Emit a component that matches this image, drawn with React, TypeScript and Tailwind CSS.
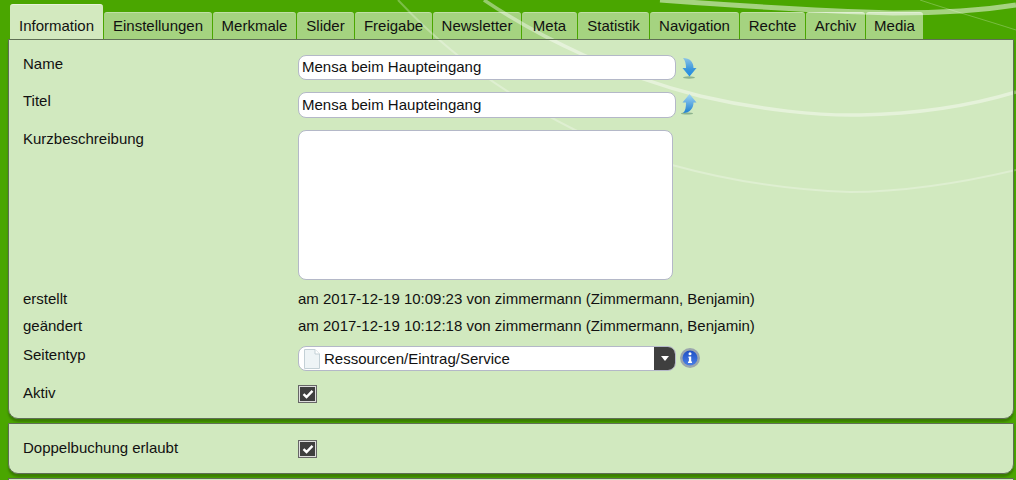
import React from 'react'

const tabs = [
  { label: 'Einstellungen', width: 'w-[108px]' },
  { label: 'Merkmale', width: 'w-[83px]' },
  { label: 'Slider', width: 'w-[57px]' },
  { label: 'Freigabe', width: 'w-[77px]' },
  { label: 'Newsletter', width: 'w-[88px]' },
  { label: 'Meta', width: 'w-[55px]' },
  { label: 'Statistik', width: 'w-[71px]' },
  { label: 'Navigation', width: 'w-[89px]' },
  { label: 'Rechte', width: 'w-[65px]' },
  { label: 'Archiv', width: 'w-[59px]' },
  { label: 'Media', width: 'w-[57px]' },
]

const Swoosh = () => (
  <svg className="absolute inset-0" width="1016" height="480" viewBox="0 0 1016 480" fill="none">
    <path d="M484 0C540 38 620 76 700 96C760 110 820 116 860 115C920 114 970 106 1016 92" stroke="#fff" strokeOpacity="0.42" strokeWidth="3.500" />
    <path d="M398 0C440 45 495 90 575 130C610 147 640 157 672 165C730 181 790 190 850 192C910 192 965 182 1016 170" stroke="#fff" strokeOpacity="0.28" strokeWidth="2" />
    <path d="M660 0C740 6 820 11 893 13C940 13 985 10 1016 5" stroke="#fff" strokeOpacity="0.5" strokeWidth="5" />
    <path d="M920 0C950 10 985 20 1016 30" stroke="#fff" strokeOpacity="0.25" strokeWidth="1" />
  </svg>
)

const ArrowDown = () => (
  <svg width="16" height="21" viewBox="0 0 16 21" className="ml-[5px] mt-[3px]">
    <defs>
      <linearGradient id="ad" x1="0" y1="0" x2="0" y2="1">
        <stop offset="0" stopColor="#8cc4e6" />
        <stop offset="0.6" stopColor="#3b97dc" />
        <stop offset="1" stopColor="#1d8ce6" />
      </linearGradient>
    </defs>
    <ellipse cx="8" cy="19.500" rx="6" ry="1.200" fill="#5f8f70" fillOpacity="0.6" />
    <path d="M2 0C9 0 12.500 4 12.500 10H15.500L8.500 18.500L1.500 10H5C5 6 4.500 3 2 0Z" fill="url(#ad)" />
  </svg>
)

const ArrowUp = () => (
  <svg width="16" height="21" viewBox="0 0 16 21" className="ml-[5px] mt-[2px]">
    <defs>
      <linearGradient id="au" x1="0" y1="0" x2="0" y2="1">
        <stop offset="0" stopColor="#a4d8f4" />
        <stop offset="1" stopColor="#1d7fd0" />
      </linearGradient>
    </defs>
    <ellipse cx="6" cy="19.500" rx="6" ry="1" fill="#5f8f70" fillOpacity="0.6" />
    <path d="M8.500 0L15.500 8.500H12.500C12.500 14 9 19 2 19C4.500 17 5 13 5 8.500H1.500L8.500 0Z" fill="url(#au)" />
  </svg>
)

const PageIcon = () => (
  <svg width="16" height="20" viewBox="0 0 16 20" className="shrink-0">
    <path d="M.5.500H11L15.500 5V19.500H.5Z" fill="#eef4f6" stroke="#c3d0d6" />
    <path d="M11 .5V5H15.500" fill="#fff" stroke="#c3d0d6" />
  </svg>
)

const InfoIcon = () => (
  <svg width="20" height="20" viewBox="0 0 20 20" className="ml-[4px] mt-[2px]">
    <defs>
      <linearGradient id="inf" x1="0" y1="0" x2="0" y2="1">
        <stop offset="0" stopColor="#1f4fc4" />
        <stop offset="1" stopColor="#4a7fe6" />
      </linearGradient>
    </defs>
    <circle cx="10" cy="10" r="10" fill="#9aa5ad" />
    <circle cx="10" cy="10" r="7.500" fill="url(#inf)" />
    <circle cx="10" cy="5.800" r="1.500" fill="#fff" />
    <path d="M8.500 8.500H11.200V13.500H12V15H8V13.500H8.900V10H8.500Z" fill="#fff" />
  </svg>
)

const Checkbox = () => (
  <div className="mt-px flex h-[18px] w-[19px] items-center justify-center border border-[#666] bg-[#ddd] p-px">
    <div className="flex h-full w-full items-center justify-center bg-[#3f3f3f]">
      <svg width="12" height="10" viewBox="0 0 12 10">
        <path d="M1.500 5.200L4.500 8L10.500 1.800" fill="none" stroke="#fff" strokeWidth="2.400" />
      </svg>
    </div>
  </div>
)

const Row: React.FC<{ label: string; className?: string; children: React.ReactNode }> = ({ label, className, children }) => (
  <div className={`flex ${className ?? ''}`}>
    <div className="w-[275px] shrink-0 text-[#111]">{label}</div>
    {children}
  </div>
)

const TextField = ({ value, tall }: { value: string; tall?: boolean }) => (
  <div
    className={`w-[378px] rounded-lg border border-[#b4b8c8] bg-white pl-[3px] text-[#111] ${tall ? 'h-[26px] leading-[24px]' : 'h-[25px] leading-[22px]'}`}
  >
    {value}
  </div>
)

export default function App() {
  return (
    <div className="relative h-[480px] w-[1016px] overflow-hidden bg-[#4aa600] font-['Liberation_Sans',Arial,sans-serif] text-[15px] leading-[17px]">
      <Swoosh />
      <div className="relative pl-[8px] pr-[2px]">
        <div className="flex h-[39px] items-end pl-[2px]">
          <div className="flex h-[35px] w-[93px] items-end justify-center rounded-t-[3px] border-t border-[#e6f2da] bg-[#d3e9bf] pb-[5px] text-[#111]">
            Information
          </div>
          {tabs.map((t) => (
            <div
              key={t.label}
              className={`ml-px flex h-[27px] items-end justify-center rounded-t-[3px] border-t border-white/30 bg-white/50 pb-[5px] text-[#111] ${t.width}`}
            >
              {t.label}
            </div>
          ))}
        </div>

        <div className="rounded-b-[10px] border border-[#5f6f55] bg-white/75 pb-[15px] pl-[14px] pt-[15px] shadow-[0_3px_2px_#3a7d00]">
          <Row label="Name" className="h-[25px]">
            <TextField value="Mensa beim Haupteingang" />
            <ArrowDown />
          </Row>
          <Row label="Titel" className="mt-[12px] h-[26px]">
            <TextField value="Mensa beim Haupteingang" tall />
            <ArrowUp />
          </Row>
          <Row label="Kurzbeschreibung" className="mt-[12px]">
            <div className="h-[150px] w-[375px] rounded-lg border border-[#b4b8c8] bg-white" />
          </Row>
          <Row label="erstellt" className="mt-[10px]">
            <div className="text-[#111]">am 2017-12-19 10:09:23 von zimmermann (Zimmermann, Benjamin)</div>
          </Row>
          <Row label="geändert" className="mt-[10px]">
            <div className="text-[#111]">am 2017-12-19 10:12:18 von zimmermann (Zimmermann, Benjamin)</div>
          </Row>
          <Row label="Seitentyp" className="mt-[12px]">
            <div className="flex h-[25px] w-[378px] items-center overflow-hidden rounded-lg border border-[#b4b8c8] bg-white pl-[5px] text-[#111]">
              <PageIcon />
              <span className="ml-[4px] flex-1">Ressourcen/Eintrag/Service</span>
              <div className="flex h-[23px] w-[21px] items-center justify-center bg-[#3f3f3f]">
                <div className="h-0 w-0 border-x-[4px] border-t-[5px] border-x-transparent border-t-white" />
              </div>
            </div>
            <InfoIcon />
          </Row>
          <Row label="Aktiv" className="mt-[13px]">
            <Checkbox />
          </Row>
        </div>

        <div className="mt-[4px] h-[51px] rounded-b-[10px] border border-[#5f6f55] bg-white/75 pl-[14px] pt-[15px] shadow-[0_3px_2px_#3a7d00]">
          <Row label="Doppelbuchung erlaubt">
            <Checkbox />
          </Row>
        </div>

        <div className="mt-[4px] h-[50px] border border-[#5f6f55] bg-white/75" />
      </div>
    </div>
  )
}
